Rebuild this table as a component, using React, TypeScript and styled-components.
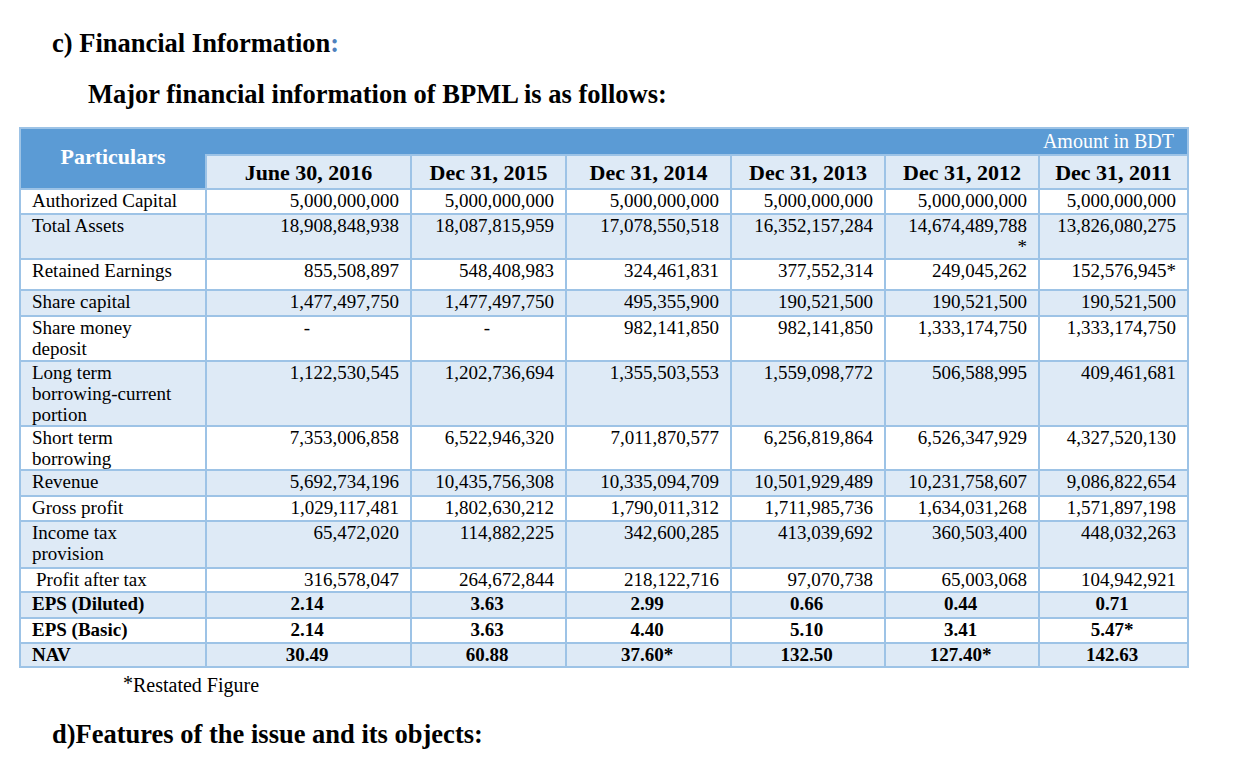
import React from "react";
import styled, { createGlobalStyle } from "styled-components";

const Global = createGlobalStyle`
  html, body { margin: 0; padding: 0; background: #ffffff; }
  body { font-family: "Liberation Serif", "Times New Roman", serif; color: #000; }
`;

const Page = styled.div`
  width: 1238px;
  height: 774px;
  overflow: hidden;
  display: flex;
  flex-direction: column;
  align-items: flex-start;
`;

const Heading = styled.h2<{ $indent: number; $top: number }>`
  margin: ${(p) => p.$top}px 0 0 ${(p) => p.$indent}px;
  font-family: "Liberation Serif", serif;
  font-weight: bold;
  font-size: 26.5px;
  line-height: 32px;
  white-space: nowrap;
`;

const Colon = styled.span`
  color: #4f81bd;
`;

const Table = styled.table`
  margin: 17px 0 0 19px;
  border-collapse: collapse;
  table-layout: fixed;
  width: 1168px;
  font-family: "Liberation Serif", serif;
  font-size: 19px;
  line-height: 21px;
  border: 2px solid #9dc3e6;
`;

const Row = styled.tr<{ $shade?: boolean; $h: number }>`
  height: ${(p) => p.$h}px;
  background: ${(p) => (p.$shade ? "#deeaf6" : "#ffffff")};
`;

const ParticularsCell = styled.th`
  background: #5b9bd5;
  color: #ffffff;
  font-size: 22px;
  font-weight: bold;
  text-align: center;
  vertical-align: middle;
  padding: 0 0 4px;
  border: 2px solid #9dc3e6;
  border-right: none;
`;

const UnitCell = styled.th`
  background: #5b9bd5;
  color: #ffffff;
  font-size: 20px;
  font-weight: normal;
  text-align: right;
  vertical-align: middle;
  padding: 0 13px 0 0;
  border: 2px solid #9dc3e6;
  border-left: none;
  border-bottom: none;
`;

const DateCell = styled.th`
  background: #deeaf6;
  font-size: 22px;
  font-weight: bold;
  text-align: center;
  vertical-align: middle;
  padding: 1px 0 0;
  white-space: nowrap;
  border: 2px solid #9dc3e6;
`;

const LabelCell = styled.td<{ $bold?: boolean; $lead?: boolean }>`
  vertical-align: top;
  padding: 0 0 0 ${(p) => (p.$lead ? 15 : 11)}px;
  font-weight: ${(p) => (p.$bold ? "bold" : "normal")};
  border: 2px solid #9dc3e6;
  white-space: nowrap;
`;

const ValueCell = styled.td<{ $align: "right" | "center"; $bold?: boolean }>`
  vertical-align: top;
  padding: ${(p) => (p.$align === "right" ? "0 11px 0 0" : "0 3px 0 0")};
  text-align: ${(p) => p.$align};
  font-weight: ${(p) => (p.$bold ? "bold" : "normal")};
  border: 2px solid #9dc3e6;
  white-space: nowrap;
`;

const Note = styled.p`
  margin: 5px 0 0 123px;
  font-family: "Liberation Serif", serif;
  font-size: 20px;
  line-height: 24px;
`;

const Star = styled.span`
  font-size: 20px;
  position: relative;
  top: -2px;
`;

type RowData = {
  label: React.ReactNode;
  values: React.ReactNode[];
  h: number;
  bold?: boolean;
  center?: boolean;
  lead?: boolean;
};

const rows: RowData[] = [
  { label: "Authorized Capital", h: 25, values: ["5,000,000,000", "5,000,000,000", "5,000,000,000", "5,000,000,000", "5,000,000,000", "5,000,000,000"] },
  {
    label: "Total Assets",
    h: 45,
    values: [
      "18,908,848,938",
      "18,087,815,959",
      "17,078,550,518",
      "16,352,157,284",
      <>14,674,489,788<br />*</>,
      "13,826,080,275",
    ],
  },
  { label: "Retained Earnings", h: 31, values: ["855,508,897", "548,408,983", "324,461,831", "377,552,314", "249,045,262", "152,576,945*"] },
  { label: "Share capital", h: 26, values: ["1,477,497,750", "1,477,497,750", "495,355,900", "190,521,500", "190,521,500", "190,521,500"] },
  {
    label: <>Share money<br />deposit</>,
    h: 45,
    values: ["-", "-", "982,141,850", "982,141,850", "1,333,174,750", "1,333,174,750"],
  },
  {
    label: <>Long term<br />borrowing-current<br />portion</>,
    h: 65,
    values: ["1,122,530,545", "1,202,736,694", "1,355,503,553", "1,559,098,772", "506,588,995", "409,461,681"],
  },
  {
    label: <>Short term<br />borrowing</>,
    h: 44,
    values: ["7,353,006,858", "6,522,946,320", "7,011,870,577", "6,256,819,864", "6,526,347,929", "4,327,520,130"],
  },
  { label: "Revenue", h: 26, values: ["5,692,734,196", "10,435,756,308", "10,335,094,709", "10,501,929,489", "10,231,758,607", "9,086,822,654"] },
  { label: "Gross profit", h: 25, values: ["1,029,117,481", "1,802,630,212", "1,790,011,312", "1,711,985,736", "1,634,031,268", "1,571,897,198"] },
  {
    label: <>Income tax<br />provision</>,
    h: 47,
    values: ["65,472,020", "114,882,225", "342,600,285", "413,039,692", "360,503,400", "448,032,263"],
  },
  { label: "Profit after tax", h: 24, lead: true, values: ["316,578,047", "264,672,844", "218,122,716", "97,070,738", "65,003,068", "104,942,921"] },
  { label: "EPS (Diluted)", h: 26, bold: true, center: true, values: ["2.14", "3.63", "2.99", "0.66", "0.44", "0.71"] },
  { label: "EPS (Basic)", h: 25, bold: true, center: true, values: ["2.14", "3.63", "4.40", "5.10", "3.41", "5.47*"] },
  { label: "NAV", h: 24, bold: true, center: true, values: ["30.49", "60.88", "37.60*", "132.50", "127.40*", "142.63"] },
];

const dates = ["June 30, 2016", "Dec 31, 2015", "Dec 31, 2014", "Dec 31, 2013", "Dec 31, 2012", "Dec 31, 2011"];
const widths = [186, 205, 155, 165, 154, 154, 149];

export default function App() {
  return (
    <Page>
      <Global />
      <Heading $indent={52} $top={27}>
        c) Financial Information<Colon>:</Colon>
      </Heading>
      <Heading $indent={88} $top={19}>
        Major financial information of BPML is as follows:
      </Heading>
      <Table>
        <colgroup>
          {widths.map((w, i) => (
            <col key={i} style={{ width: w }} />
          ))}
        </colgroup>
        <thead>
          <Row $h={27}>
            <ParticularsCell rowSpan={2}>Particulars</ParticularsCell>
            <UnitCell colSpan={6}>Amount in BDT</UnitCell>
          </Row>
          <Row $h={34}>
            {dates.map((d) => (
              <DateCell key={d}>{d}</DateCell>
            ))}
          </Row>
        </thead>
        <tbody>
          {rows.map((r, i) => (
            <Row key={i} $h={r.h} $shade={i % 2 === 1}>
              <LabelCell $bold={r.bold} $lead={r.lead}>
                {r.label}
              </LabelCell>
              {r.values.map((v, j) => {
                const dash = v === "-";
                return (
                  <ValueCell key={j} $align={r.center || dash ? "center" : "right"} $bold={r.bold}>
                    {v}
                  </ValueCell>
                );
              })}
            </Row>
          ))}
        </tbody>
      </Table>
      <Note>
        <Star>*</Star>Restated Figure
      </Note>
      <Heading $indent={52} $top={21}>
        d)Features of the issue and its objects:
      </Heading>
    </Page>
  );
}
